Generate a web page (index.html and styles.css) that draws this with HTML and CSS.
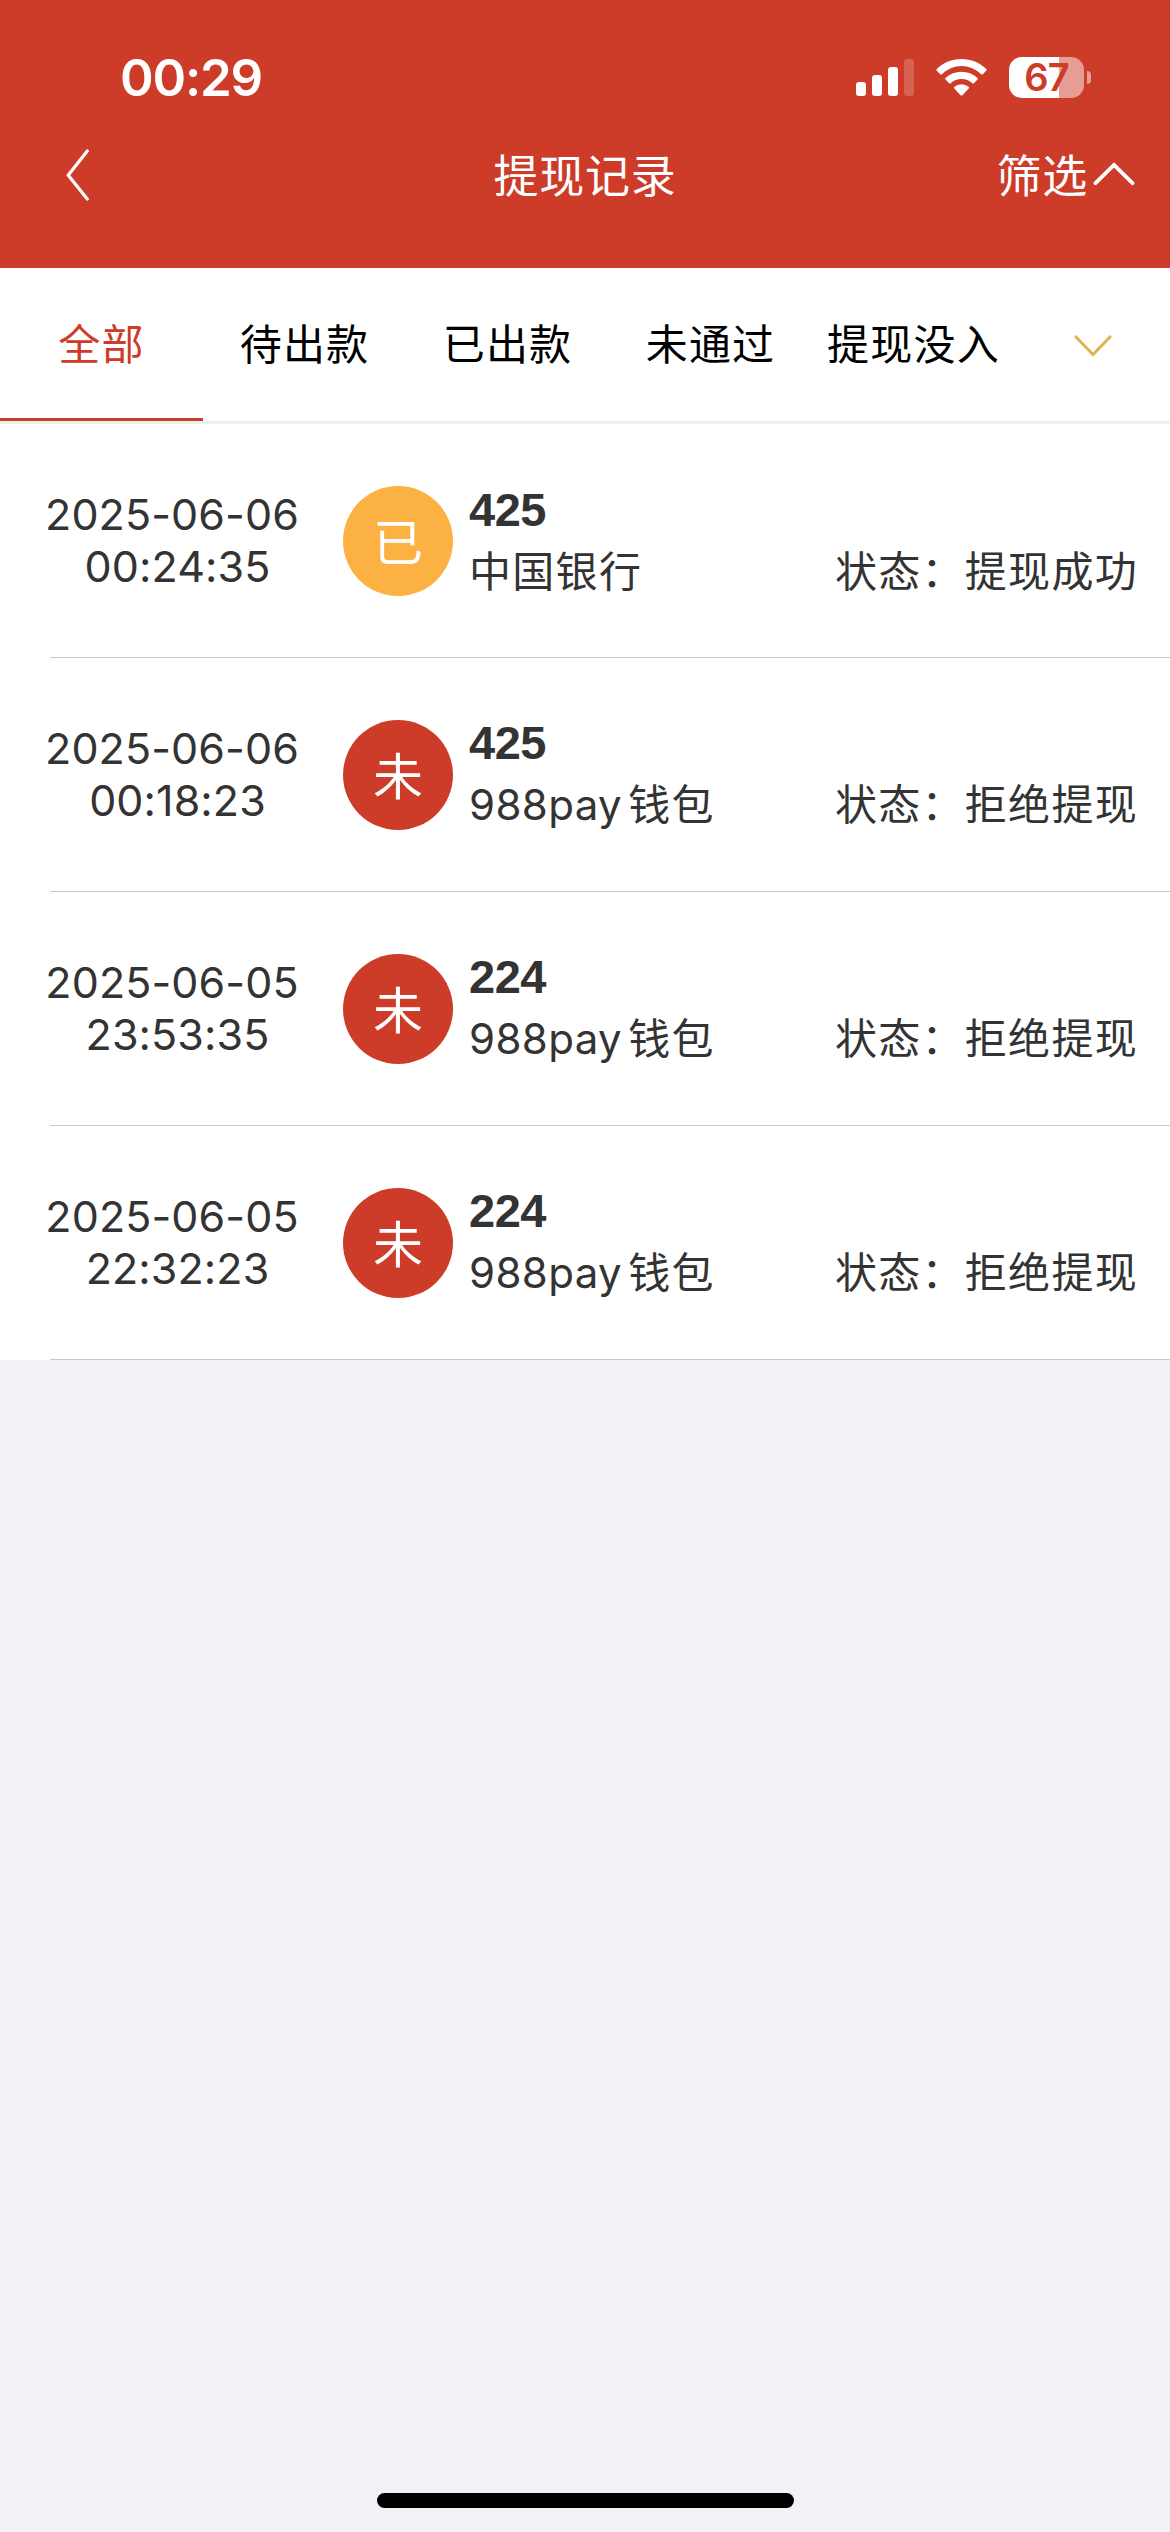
FILE: index.html
```html
<!DOCTYPE html>
<html lang="zh-CN">
<head>
<meta charset="utf-8">
<title>提现记录</title>
<link rel="stylesheet" href="styles.css">
</head>
<body>
<div class="screen">
  <header class="header">
    <div class="status-bar">
      <span class="clock">00:29</span>
      <div class="indicators">
        <svg class="signal" width="58" height="37" viewBox="0 0 58 37" fill="#fff">
          <rect x="0" y="23" width="10" height="14" rx="3"/>
          <rect x="16" y="16" width="10" height="21" rx="3"/>
          <rect x="32" y="8" width="10" height="29" rx="3"/>
          <rect x="48" y="0" width="10" height="37" rx="3" opacity=".2"/>
        </svg>
        <svg class="wifi" width="51" height="37" viewBox="0 0 51 37" fill="#fff">
          <path d="M25.500 0C35 0 43.800 3.600 50.200 10Q51 10.900 50.200 11.700L46.800 15.200Q46 16 45.200 15.200A28 28 0 0 0 5.800 15.200Q5 16 4.200 15.200L.8 11.700Q0 10.900.8 10C7.200 3.600 16 0 25.500 0Z"/>
          <path d="M25.500 12.700A24 24 0 0 1 41.500 18.900Q42.300 19.700 41.500 20.600L37.900 24.200Q37.100 25 36.300 24.200A16 16 0 0 0 14.700 24.200Q13.900 25 13.100 24.200L9.500 20.600Q8.700 19.700 9.500 18.900A24 24 0 0 1 25.500 12.700Z"/>
          <path d="M25.500 25.200A11 11 0 0 1 32.600 27.800Q33.600 28.700 32.700 29.600L26.400 36.200Q25.500 37 24.600 36.200L18.300 29.600Q17.400 28.700 18.400 27.800A11 11 0 0 1 25.500 25.200Z"/>
        </svg>
        <div class="battery">
          <div class="battery-body">67</div>
          <div class="battery-cap"></div>
        </div>
      </div>
    </div>
    <nav class="nav">
      <svg class="back" width="24" height="52" viewBox="0 0 24 52" fill="none" stroke="#fff" stroke-width="3.200" stroke-linecap="round" stroke-linejoin="round"><path d="M21.300 2L2.200 26.200L21.300 50"/></svg>
      <h1 class="title">提现记录</h1>
      <div class="filter">
        <span>筛选</span>
        <svg width="42" height="24" viewBox="0 0 42 24" fill="none" stroke="#fff" stroke-width="3.800" stroke-linecap="round"><path d="M2.500 21.200L21 3L39.500 21.200"/></svg>
      </div>
    </nav>
  </header>
  <div class="tabs">
    <div class="tab active">全部</div>
    <div class="tab">待出款</div>
    <div class="tab">已出款</div>
    <div class="tab">未通过</div>
    <div class="tab">提现没入</div>
    <div class="more"><svg width="38" height="22" viewBox="0 0 38 22" fill="none" stroke="#e0b252" stroke-width="3"><path d="M1 1L19 19.500L37 1"/></svg></div>
  </div>
  <main class="list">
    <div class="row">
      <div class="when"><span class="date">2025-06-06</span><span class="time">00:24:35</span></div>
      <div class="badge paid">已</div>
      <div class="info"><b class="amount">425</b><div class="detail"><span>中国银行</span><span>状态：提现成功</span></div></div>
    </div>
    <div class="row">
      <div class="when"><span class="date">2025-06-06</span><span class="time">00:18:23</span></div>
      <div class="badge">未</div>
      <div class="info"><b class="amount">425</b><div class="detail"><span><span class="latin">988pay</span>钱包</span><span>状态：拒绝提现</span></div></div>
    </div>
    <div class="row">
      <div class="when"><span class="date">2025-06-05</span><span class="time">23:53:35</span></div>
      <div class="badge">未</div>
      <div class="info"><b class="amount">224</b><div class="detail"><span><span class="latin">988pay</span>钱包</span><span>状态：拒绝提现</span></div></div>
    </div>
    <div class="row">
      <div class="when"><span class="date">2025-06-05</span><span class="time">22:32:23</span></div>
      <div class="badge">未</div>
      <div class="info"><b class="amount">224</b><div class="detail"><span><span class="latin">988pay</span>钱包</span><span>状态：拒绝提现</span></div></div>
    </div>
  </main>
  <div class="home-indicator"></div>
</div>
</body>
</html>
```
FILE: styles.css
```css
* { box-sizing: border-box; }
body {
  margin: 0;
  background: #f2f1f6;
  font-family: "Noto Sans CJK SC", sans-serif;
  color: #333;
}
.screen {
  width: 1170px;
  height: 2532px;
  display: flex;
  flex-direction: column;
  overflow: hidden;
}
.header {
  height: 268px;
  flex: none;
  background: #cd3b29;
  color: #fff;
}
.status-bar {
  height: 129px;
  padding: 48px 79px 0 120px;
  display: flex;
  justify-content: space-between;
  align-items: flex-start;
}
.clock {
  font: 600 51px/60px Inter, sans-serif;
  letter-spacing: -1.2px;
}
.indicators {
  display: flex;
  align-items: center;
  padding-top: 9px;
  height: 50px;
}
.wifi { margin: 0 22px; }
.battery {
  display: flex;
  align-items: center;
  gap: 3px;
}
.battery-body {
  width: 75px;
  height: 41px;
  border-radius: 13px;
  background: linear-gradient(90deg, #fff 50px, #e69d94 50px);
  color: #cd3b29;
  font: 600 38px/41px Inter, sans-serif;
  letter-spacing: -0.8px;
  text-align: center;
}
.battery-cap {
  width: 4px;
  height: 13px;
  border-radius: 0 4px 4px 0;
  background: #e69d94;
}
.nav {
  height: 90px;
  padding: 0 35px;
  display: grid;
  grid-template-columns: 1fr auto 1fr;
  align-items: center;
}
.back { margin: 2px 0 0 31px; }
.title, .filter {
  margin: 0;
  font-size: 45px;
  font-weight: 400;
  line-height: 60px;
  letter-spacing: 0.8px;
}
.filter {
  display: flex;
  justify-content: flex-end;
  align-items: center;
  gap: 5px;
}
.tabs {
  height: 156px;
  flex: none;
  display: flex;
  background: #fff;
  border-bottom: 3px solid #efefef;
}
.tab {
  width: 203px;
  border-bottom: 3px solid transparent;
  text-align: center;
  font-size: 42px;
  line-height: 147px;
  letter-spacing: 1.2px;
  color: #000;
}
.tab.active {
  color: #cd3b29;
  border-color: #cd3b29;
}
.more {
  flex: 1;
  display: flex;
  align-items: center;
  justify-content: center;
  padding-top: 3px;
}
.list {
  background: #fff;
  flex: none;
}
.row {
  height: 234px;
  padding: 0 32px 0 44px;
  display: flex;
  align-items: center;
  background: linear-gradient(#c8c8c8, #c8c8c8) 50px 100% / 100% 1px no-repeat;
}
.when {
  width: 299px;
  margin-top: -2px;
  display: flex;
  flex-direction: column;
  font: 400 43px/52px Inter, sans-serif;
  letter-spacing: 0.1px;
}
.date { width: 256px; text-align: center; }
.time { width: 267px; text-align: center; }
.badge {
  width: 110px;
  height: 110px;
  border-radius: 50%;
  background: #cd3b29;
  color: #fff;
  font-size: 50px;
  line-height: 106px;
  text-align: center;
}
.badge.paid { background: #fcb243; }
.info {
  flex: 1;
  padding: 2px 0 0 16px;
}
.amount {
  display: block;
  font: 700 47px/54px "Liberation Sans", sans-serif;
  letter-spacing: -0.5px;
}
.detail {
  display: flex;
  justify-content: space-between;
  font-size: 42px;
  line-height: 64px;
  letter-spacing: 1.3px;
}
.latin {
  font-family: Inter, sans-serif;
  letter-spacing: 0.4px;
  margin-right: 6px;
}
.home-indicator {
  width: 417px;
  height: 15px;
  margin: auto auto 24px;
  border-radius: 8px;
  background: #000;
}
```
